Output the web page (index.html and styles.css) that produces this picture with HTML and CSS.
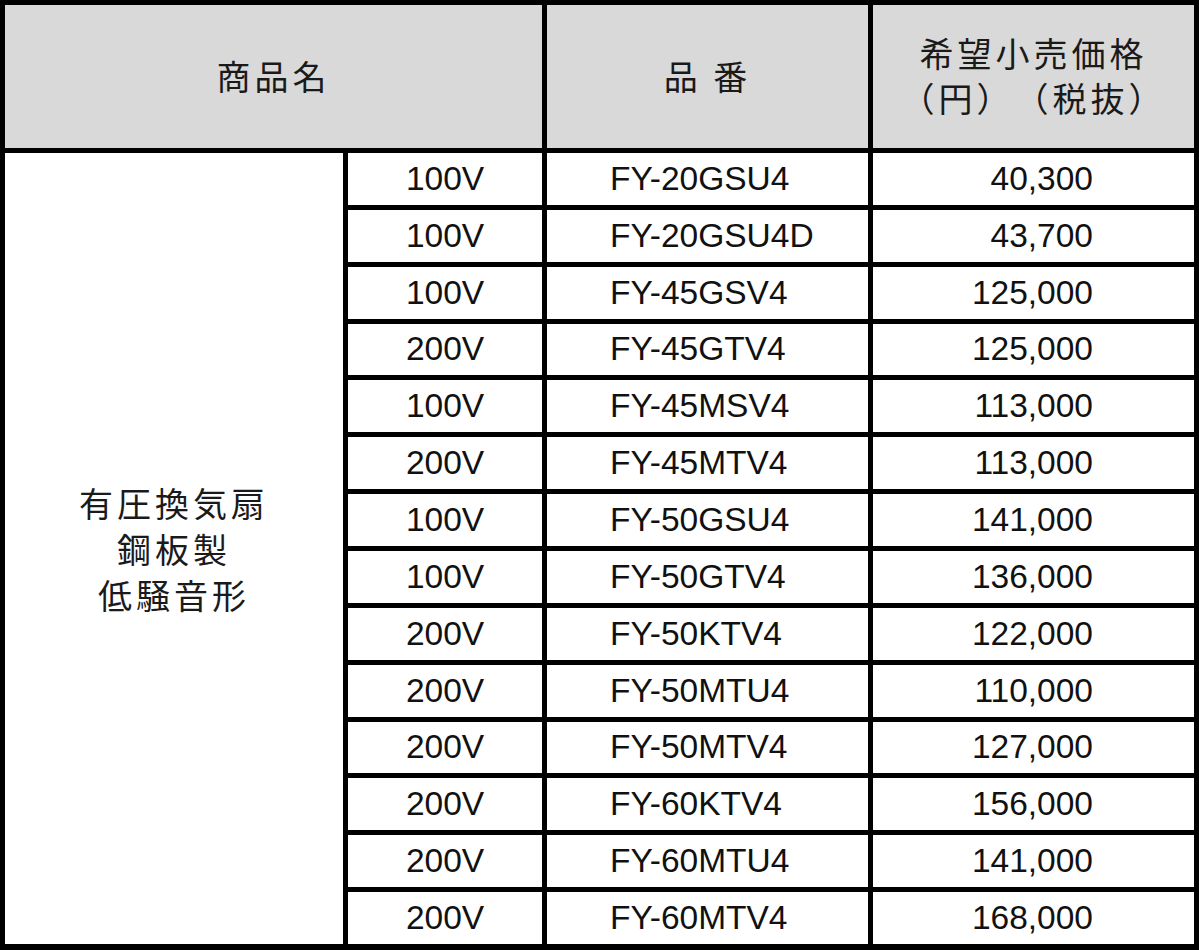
FILE: index.html
```html
<!DOCTYPE html>
<html lang="ja">
<head>
<meta charset="utf-8">
<title>価格表</title>
<link rel="stylesheet" href="styles.css">
</head>
<body>
<div class="table">
  <div class="head head-name">商品名</div>
  <div class="head head-code">品 番</div>
  <div class="head head-price">希望小売価格<br>（円）（税抜）</div>
  <div class="name">有圧換気扇<br>鋼板製<br>低騒音形</div>

  <div class="volt">100V</div><div class="code">FY-20GSU4</div><div class="price">40,300</div>
  <div class="volt">100V</div><div class="code">FY-20GSU4D</div><div class="price">43,700</div>
  <div class="volt">100V</div><div class="code">FY-45GSV4</div><div class="price">125,000</div>
  <div class="volt">200V</div><div class="code">FY-45GTV4</div><div class="price">125,000</div>
  <div class="volt">100V</div><div class="code">FY-45MSV4</div><div class="price">113,000</div>
  <div class="volt">200V</div><div class="code">FY-45MTV4</div><div class="price">113,000</div>
  <div class="volt">100V</div><div class="code">FY-50GSU4</div><div class="price">141,000</div>
  <div class="volt">100V</div><div class="code">FY-50GTV4</div><div class="price">136,000</div>
  <div class="volt">200V</div><div class="code">FY-50KTV4</div><div class="price">122,000</div>
  <div class="volt">200V</div><div class="code">FY-50MTU4</div><div class="price">110,000</div>
  <div class="volt">200V</div><div class="code">FY-50MTV4</div><div class="price">127,000</div>
  <div class="volt">200V</div><div class="code">FY-60KTV4</div><div class="price">156,000</div>
  <div class="volt">200V</div><div class="code">FY-60MTU4</div><div class="price">141,000</div>
  <div class="volt">200V</div><div class="code">FY-60MTV4</div><div class="price">168,000</div>
</div>
</body>
</html>
```

FILE: styles.css
```css
html, body {
  margin: 0;
  padding: 0;
  background: #ffffff;
}

.table {
  box-sizing: border-box;
  width: 1199px;
  height: 950px;
  background: #000000;
  padding: 5px 5px 6px 5px;
  display: grid;
  grid-template-columns: 338px 194px 321px 321px;
  grid-template-rows: 143px repeat(14, 1fr);
  gap: 5px;
  font-family: "Liberation Sans", "Noto Sans CJK JP", Arial, sans-serif;
  font-size: 33.5px;
  color: #111111;
}

.table > div {
  background: #ffffff;
  display: flex;
  align-items: center;
}

.head {
  background: #d9d9d9 !important;
  justify-content: center;
  text-align: center;
  font-family: "Noto Sans CJK JP", sans-serif;
  font-size: 34px;
  letter-spacing: 4px;
  line-height: 45px;
  color: #1a1a1a;
  text-spacing-trim: space-all;
}

.head-name {
  grid-column: 1 / span 2;
  padding-bottom: 2px;
}

.head-code {
  padding-bottom: 2px;
}

.head-price {
  padding-bottom: 4px;
}

.name {
  grid-column: 1;
  grid-row: 2 / span 14;
  justify-content: center;
  text-align: center;
  font-family: "Noto Sans CJK JP", sans-serif;
  font-size: 34px;
  letter-spacing: 4px;
  line-height: 46px;
  color: #1a1a1a;
}

.volt {
  grid-column: 2;
  justify-content: center;
}

.code {
  grid-column: 3;
  padding-left: 63px;
}

.price {
  grid-column: 4;
  justify-content: flex-end;
  padding-right: 101px;
}
```
